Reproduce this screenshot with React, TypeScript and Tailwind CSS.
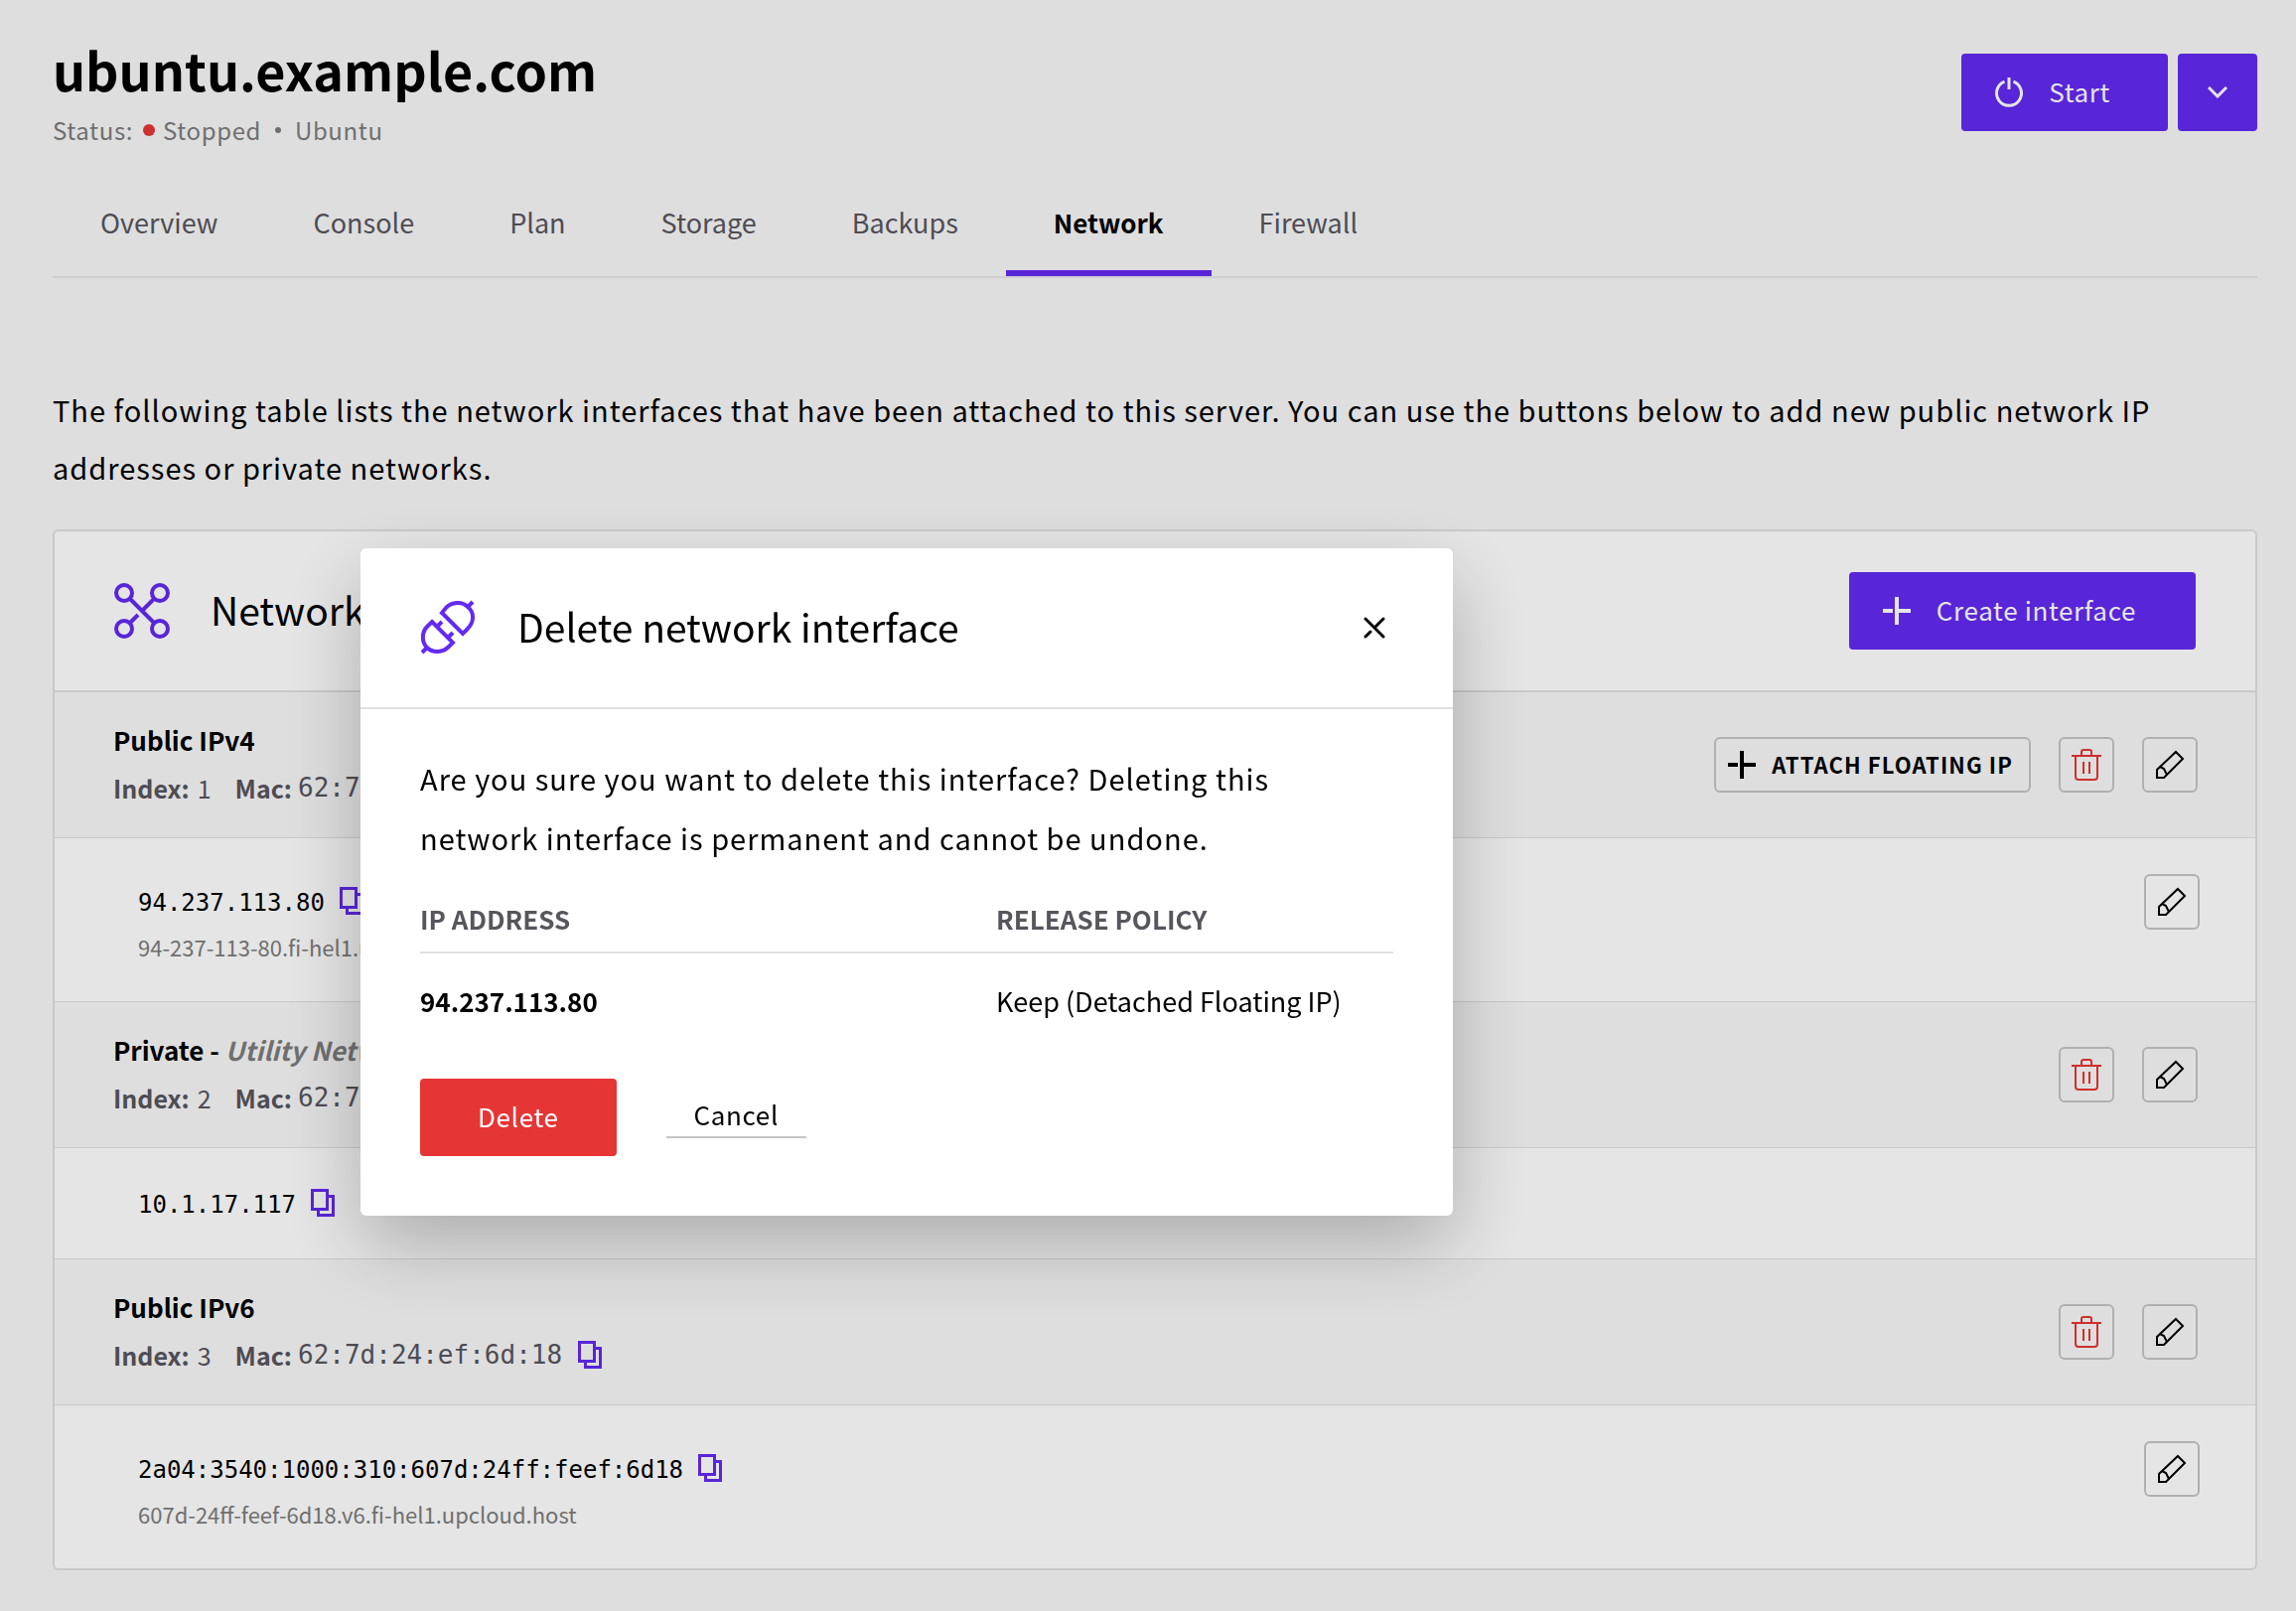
import type { ReactNode } from 'react';

const TABS = ['Overview', 'Console', 'Plan', 'Storage', 'Backups', 'Network', 'Firewall'];

function PowerIcon() {
  return (
    <svg width="28" height="30" viewBox="0 0 28 30" fill="none" stroke="currentColor" strokeWidth="3" aria-hidden="true">
      <path d="M9.5 4.2A12.5 12.5 0 1 0 18.5 4.2" />
      <path d="M14 0V12" />
    </svg>
  );
}

function ChevronIcon() {
  return (
    <svg width="20" height="12" viewBox="0 0 20 12" fill="none" stroke="currentColor" strokeWidth="3" aria-hidden="true">
      <path d="M1 1L10 10L19 1" />
    </svg>
  );
}

function PlusIcon() {
  return (
    <svg width="28" height="28" viewBox="0 0 28 28" fill="none" stroke="currentColor" strokeWidth="4" aria-hidden="true">
      <path d="M14 0V28M0 14H10M14 14H28" />
    </svg>
  );
}

function NetworkIcon() {
  return (
    <svg width="56" height="56" viewBox="0 0 56 56" fill="none" stroke="currentColor" strokeWidth="4" aria-hidden="true">
      <circle cx="10" cy="10" r="8" />
      <circle cx="46" cy="10" r="8" />
      <circle cx="10" cy="46" r="8" />
      <circle cx="46" cy="46" r="8" />
      <path d="M16 16L40 40M40 16L27 29M24 32L16 40" />
    </svg>
  );
}

function PlugIcon() {
  return (
    <svg width="56" height="56" viewBox="0 0 56 56" fill="none" stroke="currentColor" strokeWidth="4" aria-hidden="true">
      <path d="M22 13L43 34L47 30C55 22 55 13 48 7C42 1 32 2 26 8Z" />
      <path d="M48 7L53 2" />
      <path d="M12 22L33 43L29 47C23 53 13 54 7 48C1 42 2 32 7 27Z" />
      <path d="M7 48L2 53M17 27L22 22M28 38L33 33" />
    </svg>
  );
}

function CloseIcon() {
  return (
    <svg width="22" height="22" viewBox="0 0 22 22" fill="none" stroke="currentColor" strokeWidth="3" strokeLinecap="round" aria-hidden="true">
      <path d="M2 2L20 20M20 2L11 11M7 15L2 20" />
    </svg>
  );
}

function CopyIcon() {
  return (
    <svg width="24" height="28" viewBox="0 0 24 28" fill="none" stroke="currentColor" strokeWidth="3" aria-hidden="true">
      <path d="M1.5 1.5H16.5V20.5H1.5Z" />
      <path d="M18 7.5H22.5V26.5H7.5V22" />
    </svg>
  );
}

function TrashIcon() {
  return (
    <svg width="30" height="32" viewBox="0 0 30 32" fill="none" stroke="currentColor" strokeWidth="2" aria-hidden="true">
      <path d="M0 7H30M10 7V3Q10 1 12 1H18Q20 1 20 3V7" />
      <path d="M4 7V28Q4 31 7 31H23Q26 31 26 28V7" />
      <path d="M12 13V25M18 13V25" />
    </svg>
  );
}

function PencilIcon() {
  return (
    <svg width="30" height="30" viewBox="0 0 30 30" fill="none" stroke="currentColor" strokeWidth="2" aria-hidden="true">
      <path d="M21 2L28 9L9 28H2V20Z" />
      <path d="M5 17L9 19L12 25" />
    </svg>
  );
}

function IconButton({ label, children, danger }: { label: string; children: ReactNode; danger?: boolean }) {
  return (
    <button
      type="button"
      aria-label={label}
      className={
        danger
          ? 'flex size-14 shrink-0 items-center justify-center rounded-md border-2 border-[#c4c4c4] text-[#e63535]'
          : 'flex size-14 shrink-0 items-center justify-center rounded-md border-2 border-[#c4c4c4] text-black'
      }
    >
      {children}
    </button>
  );
}

function CopyButton() {
  return (
    <button type="button" aria-label="Copy" className="shrink-0 text-[#632af1]">
      <CopyIcon />
    </button>
  );
}

function InterfaceRow({ title, note, index, mac, attach }: { title: string; note?: string; index: number; mac: string; attach?: boolean }) {
  return (
    <div className="flex items-center justify-between border-b border-[#e0e0e0] bg-[#f8f8f8] pr-[58px] pl-[59px]">
      <div className="pt-6 pb-[26px]">
        <h3 className="text-[26px] leading-12 font-bold">
          {title}
          {note && <span className="text-[#7c7c7c] italic"> {note}</span>}
        </h3>
        <div className="flex h-12 items-center text-[#57555d]">
          <span className="text-[25px] leading-12 font-bold">Index:</span>
          <span className="ml-2 text-[25px] leading-12">{index}</span>
          <span className="ml-6 text-[25px] leading-12 font-bold">Mac:</span>
          <span className="mr-4 ml-1.5 font-['DejaVu_Sans_Mono',monospace] text-[26px] leading-12">{mac}</span>
          <CopyButton />
        </div>
      </div>
      <div className="flex items-center gap-7">
        {attach && (
          <button type="button" className="flex h-14 items-center gap-4 rounded-md border-2 border-[#c4c4c4] pr-4 pl-3 text-[22px] font-bold tracking-wider">
            <PlusIcon />
            <span className="pb-0.5">ATTACH FLOATING IP</span>
          </button>
        )}
        <IconButton label="Delete interface" danger>
          <TrashIcon />
        </IconButton>
        <IconButton label="Edit interface">
          <PencilIcon />
        </IconButton>
      </div>
    </div>
  );
}

function AddressRow({ address, host }: { address: string; host?: string }) {
  return (
    <div className="flex items-start justify-between border-b border-[#e0e0e0] pr-14 pl-[84px] last:border-b-0">
      <div className={host ? 'pt-[35px] pb-[37px]' : 'pt-[27px] pb-7'}>
        <div className="flex h-14 items-center gap-[15px]">
          <span className="pt-1 font-['DejaVu_Sans_Mono',monospace] text-[24px]">{address}</span>
          <CopyButton />
        </div>
        {host && <p className="text-[22px] leading-9 text-[#7c7c7c]">{host}</p>}
      </div>
      {host && (
        <div className="pt-9">
          <IconButton label="Edit address">
            <PencilIcon />
          </IconButton>
        </div>
      )}
    </div>
  );
}

function DeleteDialog() {
  return (
    <div className="fixed inset-0 flex items-start bg-black/10 pt-[552px] pl-[363px]">
      <section role="dialog" aria-modal="true" aria-labelledby="dialog-title" className="w-[1100px] rounded-md bg-white shadow-[0_30px_80px_rgba(0,0,0,0.25)]">
        <header className="flex h-[162px] items-center border-b-2 border-[#e0e0e0] px-[60px]">
          <span className="text-[#632af1]">
            <PlugIcon />
          </span>
          <h2 id="dialog-title" className="ml-[42px] flex-1 pb-1 text-[39px] leading-[60px]">
            Delete network interface
          </h2>
          <button type="button" aria-label="Close" className="mr-2">
            <CloseIcon />
          </button>
        </header>
        <div className="px-[60px] pt-[39px] pb-[60px]">
          <p className="pr-4 text-[29px] leading-[60px] tracking-[1px]">
            Are you sure you want to delete this interface? Deleting this network interface is permanent and cannot be undone.
          </p>
          <table className="w-full text-left">
            <thead>
              <tr className="border-b-2 border-[#e0e0e0] text-[26px] text-[#57555d]">
                <th className="w-[580px] pt-5 pb-0.5 leading-[63px] font-bold">IP ADDRESS</th>
                <th className="pt-5 pb-0.5 leading-[63px] font-bold">RELEASE POLICY</th>
              </tr>
            </thead>
            <tbody>
              <tr>
                <td className="pb-1 text-[26px] leading-[96px] font-bold">94.237.113.80</td>
                <td className="pb-1 text-[27px] leading-[96px]">Keep (Detached Floating IP)</td>
              </tr>
            </tbody>
          </table>
          <div className="mt-[26px] flex items-center gap-[50px]">
            <button type="button" className="h-[78px] rounded bg-[#e63535] px-[58px] pb-1 text-[26px] tracking-wide text-white">
              Delete
            </button>
            <button type="button" className="border-b-2 border-[#c4c4c4] px-7 pb-1 text-[26px] leading-9 tracking-wide">
              Cancel
            </button>
          </div>
        </div>
      </section>
    </div>
  );
}

export default function App() {
  return (
    <div className="min-h-screen bg-[#f8f8f8] pt-8 pr-[39px] pb-[41px] pl-[53px] font-['Noto_Sans_CJK_JP','Noto_Sans',sans-serif] text-black">
      <header className="flex items-start justify-between">
        <div>
          <h1 className="text-[52px] leading-[76px] font-bold">ubuntu.example.com</h1>
          <p className="mt-[3px] flex items-center text-[24px] leading-10 tracking-wide text-[#7c7c7c]">
            Status:
            <span className="mr-2 ml-2.5 size-3 rounded-full bg-[#e63535]" />
            Stopped
            <span className="mx-3.5 size-1.5 rounded-full bg-[#7c7c7c]" />
            Ubuntu
          </p>
        </div>
        <div className="mt-[22px] flex gap-2.5 text-white">
          <button type="button" className="flex h-[78px] items-center gap-[26px] rounded bg-[#632af1] pr-[58px] pl-[34px] text-[26px] tracking-wide">
            <PowerIcon />
            <span className="pb-1">Start</span>
          </button>
          <button type="button" aria-label="More actions" className="flex h-[78px] w-20 items-center justify-center rounded bg-[#632af1]">
            <ChevronIcon />
          </button>
        </div>
      </header>

      <nav className="mt-[31px] flex border-b-2 border-[#e6e6e6]">
        {TABS.map((tab) => (
          <a
            key={tab}
            href={'#' + tab.toLowerCase()}
            aria-current={tab === 'Network' ? 'page' : undefined}
            className={
              tab === 'Network'
                ? 'border-b-[6px] border-[#632af1] px-12 pt-[18px] pb-6 text-[26px] leading-12 font-bold'
                : 'border-b-[6px] border-transparent px-12 pt-[18px] pb-6 text-[27px] leading-12 text-[#57555d]'
            }
          >
            {tab}
          </a>
        ))}
      </nav>

      <p className="mt-[103px] text-[29px] leading-[58px] tracking-[1px]">
        The following table lists the network interfaces that have been attached to this server. You can use the buttons below to add new public network IP
        addresses or private networks.
      </p>

      <main className="mt-[34px] overflow-hidden rounded-md border-2 border-[#e0e0e0] bg-white">
        <div className="flex h-[162px] items-center border-b-2 border-[#e0e0e0] px-[60px]">
          <span className="text-[#632af1]">
            <NetworkIcon />
          </span>
          <h2 className="ml-[41px] flex-1 pb-1 text-[39px] leading-[60px]">Network interfaces</h2>
          <button type="button" className="flex h-[78px] items-center gap-[26px] rounded bg-[#632af1] pr-[60px] pl-[34px] text-[26px] tracking-wide text-white">
            <PlusIcon />
            <span className="pb-1">Create interface</span>
          </button>
        </div>
        <InterfaceRow title="Public IPv4" index={1} mac="62:7d:24:ef:39:e1" attach />
        <AddressRow address="94.237.113.80" host="94-237-113-80.fi-hel1.upcloud.host" />
        <InterfaceRow title="Private -" note="Utility Network" index={2} mac="62:7d:24:ef:96:7b" />
        <AddressRow address="10.1.17.117" />
        <InterfaceRow title="Public IPv6" index={3} mac="62:7d:24:ef:6d:18" />
        <AddressRow address="2a04:3540:1000:310:607d:24ff:feef:6d18" host="607d-24ff-feef-6d18.v6.fi-hel1.upcloud.host" />
      </main>

      <DeleteDialog />
    </div>
  );
}
